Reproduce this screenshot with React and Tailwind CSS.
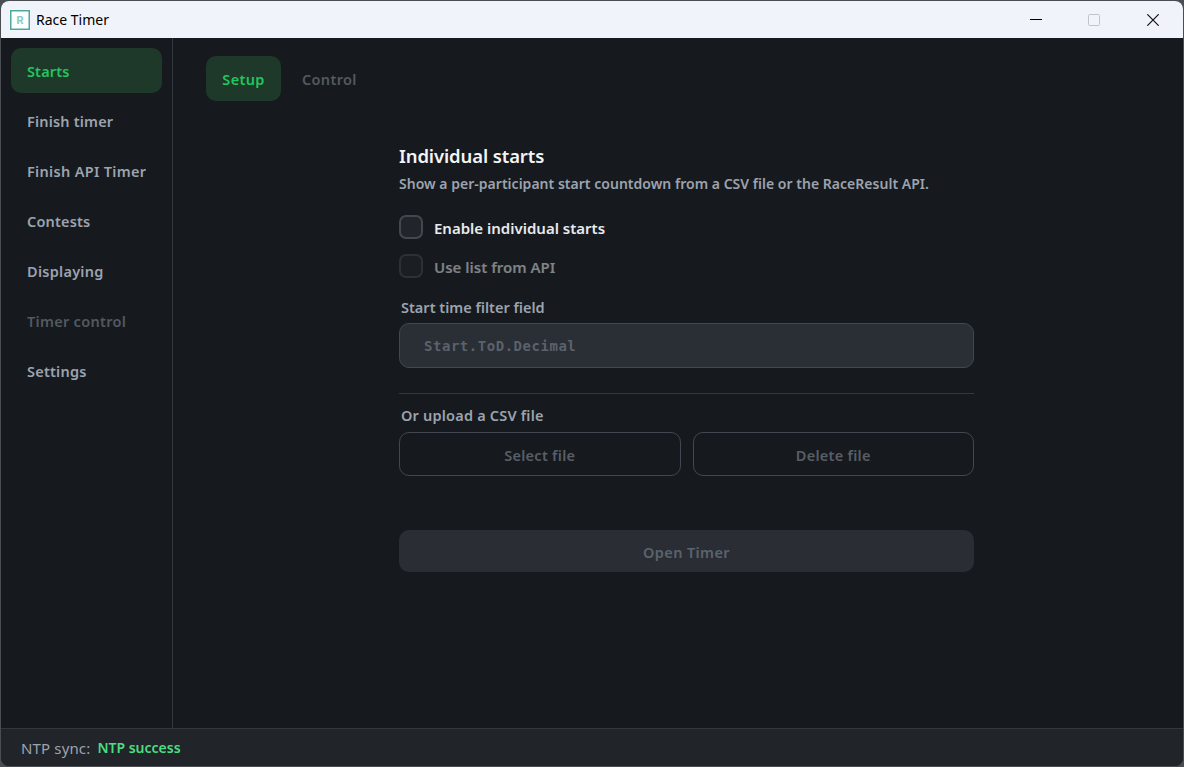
import { useState } from 'react';
import clsx from 'clsx';

const navItems = [
    { label: 'Starts', tracking: 'tracking-[0.15px]' },
    { label: 'Finish timer', tracking: 'tracking-[0.18px]' },
    { label: 'Finish API Timer', tracking: 'tracking-[0.32px]' },
    { label: 'Contests', tracking: 'tracking-[0.17px]' },
    { label: 'Displaying', tracking: 'tracking-[0.27px]' },
    { label: 'Timer control', tracking: 'tracking-[0.3px]', disabled: true },
    { label: 'Settings', tracking: 'tracking-[0.22px]' },
];

const TitleBar = () => (
    <header className="flex h-[37px] shrink-0 items-center justify-between bg-[#f1f3fb] text-black">
        <div className="flex items-center pl-[9px]">
            <svg width="20" height="20" viewBox="0 0 20 20">
                <rect x="0.75" y="0.75" width="18.5" height="18.5" fill="#fff" stroke="#4aab9d" strokeWidth="1.5" />
                <text x="10" y="14" textAnchor="middle" fontSize="11" fontWeight="700" fontFamily="Roboto, sans-serif" fill="#86cbbf">R</text>
            </svg>
            <span className="ml-[6px] text-[14px] leading-5">Race Timer</span>
        </div>
        <div className="flex">
            <button className="flex h-[37px] w-[58px] items-center justify-center">
                <svg width="12" height="12" viewBox="0 0 12 12">
                    <path d="M0 5.5h12" stroke="#000" />
                </svg>
            </button>
            <button className="flex h-[37px] w-[58px] items-center justify-center" disabled>
                <svg width="12" height="12" viewBox="0 0 12 12">
                    <rect x="0.5" y="0.5" width="11" height="11" rx="1" fill="none" stroke="#c3c4ca" />
                </svg>
            </button>
            <button className="flex h-[37px] w-[60px] items-center justify-center">
                <svg width="12" height="12" viewBox="0 0 12 12">
                    <path d="M0.3 0.3l11.4 11.4M11.7 0.3L0.3 11.7" stroke="#111" strokeWidth="1.2" />
                </svg>
            </button>
        </div>
    </header>
);

const Sidebar = ({ active, onSelect }) => (
    <nav className="flex w-[172px] shrink-0 flex-col gap-[5px] border-r border-[#34373d] p-[10px]">
        {navItems.map(({ label, tracking, disabled }) => (
            <button
                key={label}
                disabled={disabled}
                onClick={() => onSelect(label)}
                className={clsx(
                    'h-[45px] rounded-[10px] px-4 pt-[2px] text-left text-[14.5px] font-semibold',
                    active === label ? 'bg-[#1e3829] text-[#22c55e]' : disabled ? 'text-[#535960]' : 'text-[#9ca3af]'
                )}
            >
                <span className={clsx('block overflow-hidden whitespace-nowrap', tracking)}>{label}</span>
            </button>
        ))}
    </nav>
);

const Checkbox = ({ label, disabled }) => {
    const [checked, setChecked] = useState(false);
    return (
        <label className={clsx('flex h-6 items-center gap-[11px]', disabled && 'opacity-50')}>
            <button
                disabled={disabled}
                onClick={() => setChecked(v => !v)}
                className={clsx('h-6 w-6 shrink-0 rounded-[7px] border-2 border-[#414852]', checked ? 'bg-[#22c55e]' : 'bg-[#212429]')}
            />
            <span className="mt-[3px] text-[15px] font-semibold text-[#e8eaed]">{label}</span>
        </label>
    );
};

const SetupForm = () => (
    <div className="mx-auto mt-[44px] flex w-[575px] flex-col font-semibold text-[#9ca3af]">
        <h1 className="text-[18.5px] leading-[22px] tracking-[-0.12px] text-[#f3f4f6]">Individual starts</h1>
        <p className="mt-[7px] whitespace-nowrap text-[14px] leading-5 tracking-[0.02px]">
            Show a per-participant start countdown from a CSV file or the RaceResult API.
        </p>

        <div className="mt-[21px] flex flex-col gap-[15px]">
            <Checkbox label="Enable individual starts" />
            <Checkbox label="Use list from API" disabled />
        </div>

        <span className="mt-[19px] pl-[2px] text-[14.5px] leading-5">Start time filter field</span>
        <input
            disabled
            placeholder="Start.ToD.Decimal"
            className="mt-[6px] h-[45px] rounded-[10px] border border-[#414852] bg-[#2a2e35] px-6 font-['DejaVu_Sans_Mono',monospace] text-[14px] font-bold tracking-[0.53px] placeholder:text-[#5b626c]"
        />

        <hr className="mt-[25px] border-[#34373d]" />

        <span className="mt-[11px] pl-[2px] text-[14.5px] leading-5 tracking-[0.2px]">Or upload a CSV file</span>
        <div className="mt-[7px] grid grid-cols-2 gap-3 text-[14.5px] tracking-[0.27px] text-[#585e67]">
            <button disabled className="h-[44px] rounded-[10px] border border-[#414852] pt-[4px]">Select file</button>
            <button disabled className="h-[44px] rounded-[10px] border border-[#414852] pt-[4px]">Delete file</button>
        </div>

        <button disabled className="mt-[54px] h-[42px] rounded-[10px] bg-[#2a2e34] pt-[4px] text-[14.5px] tracking-[0.38px] text-[#5b636d]">
            Open Timer
        </button>
    </div>
);

const App = () => {
    const [active, setActive] = useState('Starts');
    const [tab, setTab] = useState('Setup');

    return (
        <div className="h-[767px] w-[1184px] bg-[#4a4d52] p-px font-['Noto_Sans',sans-serif]">
            <div className="flex h-full flex-col overflow-hidden rounded-[8px] bg-[#161a1e]">
                <TitleBar />
                <div className="flex min-h-0 flex-1">
                    <Sidebar active={active} onSelect={setActive} />
                    <main className="flex-1 pt-[18px] pr-4 pl-[33px]">
                        <div className="flex gap-[5px]">
                            {['Setup', 'Control'].map(name => (
                                <button
                                    key={name}
                                    onClick={() => setTab(name)}
                                    className={clsx(
                                        'h-[45px] rounded-[10px] pt-[3px] text-[14.5px] font-semibold tracking-[0.33px]',
                                        tab === name ? 'w-[75px] bg-[#1e3829] text-[#22c55e]' : 'px-4 text-[#535960]'
                                    )}
                                >
                                    {name}
                                </button>
                            ))}
                        </div>
                        <SetupForm />
                    </main>
                </div>
                <footer className="flex h-[38px] shrink-0 items-center border-t border-[#34373d] bg-[#212429] pt-[2px] pl-5 text-[15px]">
                    <span className="tracking-[0.15px] text-[#9ca3af]">NTP sync:</span>
                    <span className="mb-[2px] ml-[7px] text-[14px] font-semibold text-[#4ade80]">NTP success</span>
                </footer>
            </div>
        </div>
    );
};

export default App;
